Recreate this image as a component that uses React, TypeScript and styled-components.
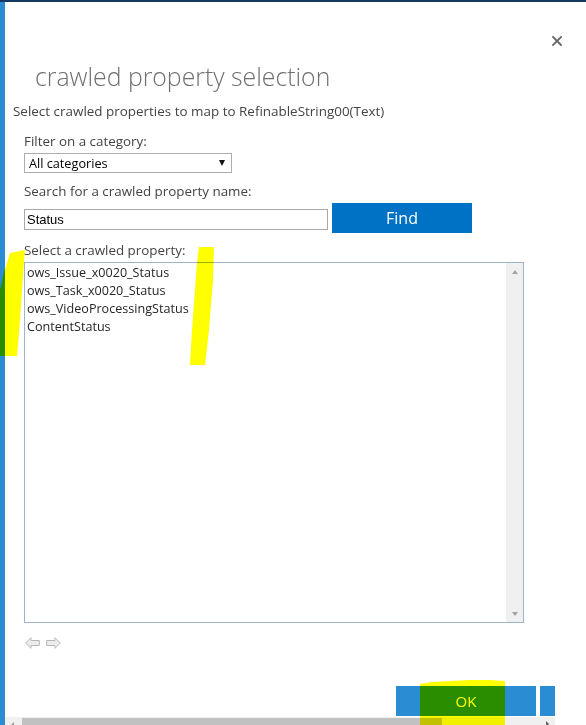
import React from 'react';
import styled, { createGlobalStyle } from 'styled-components';

const Global = createGlobalStyle`
  html, body { margin: 0; padding: 0; background: #fff; }
  body { font-family: "Open Sans", "Noto Sans", sans-serif; }
  * { box-sizing: border-box; }
`;

const Page = styled.div`
  position: relative;
  width: 586px;
  height: 725px;
  display: flex;
  flex-direction: column;
  overflow: hidden;
  background: #fff;
`;
const TopBar = styled.div`
  flex: none;
  height: 2px;
  background: #163a5f;
`;
const Body = styled.div`
  flex: 1;
  display: flex;
  min-height: 0;
`;
const LeftBar = styled.div`
  flex: none;
  width: 5px;
  background: #2a8dd4;
`;
const Main = styled.div`
  flex: 1;
  display: flex;
  flex-direction: column;
  min-width: 0;
`;
const CloseRow = styled.div`
  height: 58px;
  display: flex;
  justify-content: flex-end;
  padding: 34px 24px 0 0;
`;
const Title = styled.h1`
  margin: 0 0 0 30px;
  font-weight: 300;
  font-size: 24.8px;
  line-height: 32px;
  color: #6f6f6f;
  white-space: nowrap;
`;
const Subtitle = styled.div`
  margin: 10px 0 0 8px;
  font-size: 13.45px;
  line-height: 18px;
  color: #444;
  white-space: nowrap;
`;
const Form = styled.div`
  display: flex;
  flex-direction: column;
  padding-left: 19px;
`;
const Label = styled.div<{ $top: number }>`
  margin-top: ${p => p.$top}px;
  font-size: 13.4px;
  line-height: 18px;
  color: #444;
  white-space: nowrap;
`;
const SelectBox = styled.div`
  margin-top: 3px;
  width: 208px;
  height: 20px;
  border: 1px solid #abadb3;
  display: flex;
  align-items: center;
  justify-content: space-between;
  padding: 0 6px 0 4px;
  font-size: 12.7px;
  color: #000;
`;
const Caret = styled.span`
  width: 0;
  height: 0;
  border-left: 3.5px solid transparent;
  border-right: 3.5px solid transparent;
  border-top: 6px solid #111;
`;
const SearchRow = styled.div`
  margin-top: 3px;
  display: flex;
  align-items: flex-start;
  gap: 4px;
`;
const TextInput = styled.input`
  margin-top: 6px;
  width: 304px;
  height: 21px;
  border: 1px solid #a9a9a9;
  padding: 0 2px;
  font-family: "Liberation Sans", Arial, sans-serif;
  font-size: 13px;
  color: #000;
  outline: none;
`;
const FindButton = styled.button`
  width: 140px;
  height: 30px;
  border: none;
  background: #0072c6;
  color: #fff;
  font-family: "Open Sans", sans-serif;
  font-size: 16px;
  line-height: 30px;
  padding: 0;
`;
const ListBox = styled.div`
  margin-top: 3px;
  width: 500px;
  height: 361px;
  border: 1px solid #9eb4c8;
  display: flex;
`;
const Items = styled.div`
  flex: 1;
  padding: 1px 0 0 2px;
`;
const Item = styled.div`
  font-size: 12.6px;
  line-height: 18px;
  color: #262626;
  white-space: nowrap;
`;
const VScroll = styled.div`
  flex: none;
  width: 17px;
  background: #f0f0f0;
  display: flex;
  flex-direction: column;
  justify-content: space-between;
  align-items: center;
  padding: 7px 0 6px;
`;
const TriUp = styled.span`
  width: 0;
  height: 0;
  border-left: 3.5px solid transparent;
  border-right: 3.5px solid transparent;
  border-bottom: 4px solid #a3a3a3;
`;
const TriDown = styled.span`
  width: 0;
  height: 0;
  border-left: 3.5px solid transparent;
  border-right: 3.5px solid transparent;
  border-top: 4px solid #a3a3a3;
`;
const NavRow = styled.div`
  margin-top: 14px;
  display: flex;
  gap: 6px;
  padding-left: 1px;
`;
const Footer = styled.div`
  margin-top: auto;
  width: 550px;
  overflow: hidden;
  display: flex;
  flex-direction: column;
`;
const ButtonRow = styled.div`
  display: flex;
  gap: 4px;
  padding-left: 391px;
  height: 30px;
`;
const DialogButton = styled.button`
  flex: none;
  width: 140px;
  height: 30px;
  border: none;
  padding: 0;
  background: #2a8dd4;
  color: #fff;
  font-family: "Open Sans", sans-serif;
  font-size: 15px;
  line-height: 30px;
`;
const HScroll = styled.div`
  margin-top: 1px;
  height: 8px;
  background: #f0f0f0;
  display: flex;
  align-items: flex-start;
  padding-top: 1px;
  position: relative;
`;
const HThumb = styled.div`
  margin-left: 17px;
  width: 420px;
  height: 8px;
  background: #c1c1c1;
`;
const HArrowRight = styled.span`
  position: absolute;
  right: 6px;
  top: 4px;
  width: 0;
  height: 0;
  border-top: 3px solid transparent;
  border-bottom: 3px solid transparent;
  border-left: 3px solid #606060;
`;
const HArrowLeft = styled.span`
  position: absolute;
  left: 6px;
  top: 5px;
  width: 0;
  height: 0;
  border-top: 3px solid transparent;
  border-bottom: 3px solid transparent;
  border-right: 3px solid #9a9a9a;
`;
const Marker = styled.svg`
  position: absolute;
  left: 0;
  top: 0;
  width: 586px;
  height: 725px;
  pointer-events: none;
  mix-blend-mode: multiply;
`;

const CloseIcon = () => (
  <svg width="10" height="10" viewBox="0 0 10 10">
    <path d="M1 1 L9 9 M9 1 L1 9" stroke="#666" strokeWidth="1.8" strokeLinecap="square" />
  </svg>
);

const NavArrow = ({ dir }: { dir: 'left' | 'right' }) => (
  <svg width="15" height="12" viewBox="0 0 15 12" style={dir === 'right' ? { transform: 'scaleX(-1)' } : undefined}>
    <polygon points="0.7,6 6,0.7 6,3.5 14.3,3.5 14.3,8.5 6,8.5 6,11.3" fill="#ececec" stroke="#b8b8b8" strokeWidth="1" />
  </svg>
);

const items = [
  'ows_Issue_x0020_Status',
  'ows_Task_x0020_Status',
  'ows_VideoProcessingStatus',
  'ContentStatus',
];

export default function App() {
  return (
    <>
      <Global />
      <Page>
        <TopBar />
        <Body>
          <LeftBar />
          <Main>
            <CloseRow>
              <CloseIcon />
            </CloseRow>
            <Title>crawled property selection</Title>
            <Subtitle>Select crawled properties to map to RefinableString00(Text)</Subtitle>
            <Form>
              <Label $top={12}>Filter on a category:</Label>
              <SelectBox>
                <span>All categories</span>
                <Caret />
              </SelectBox>
              <Label $top={9}>Search for a crawled property name:</Label>
              <SearchRow>
                <TextInput defaultValue="Status" />
                <FindButton>Find</FindButton>
              </SearchRow>
              <Label $top={8}>Select a crawled property:</Label>
              <ListBox>
                <Items>
                  {items.map(i => (
                    <Item key={i}>{i}</Item>
                  ))}
                </Items>
                <VScroll>
                  <TriUp />
                  <TriDown />
                </VScroll>
              </ListBox>
              <NavRow>
                <NavArrow dir="left" />
                <NavArrow dir="right" />
              </NavRow>
            </Form>
            <Footer>
              <ButtonRow>
                <DialogButton>OK</DialogButton>
                <DialogButton aria-label="Cancel" />
              </ButtonRow>
              <HScroll>
                <HArrowLeft />
                <HThumb />
                <HArrowRight />
              </HScroll>
            </Footer>
          </Main>
        </Body>
        <Marker viewBox="0 0 586 725">
          <polygon fill="#ffff00" points="10,253 25,250 23,275 20,320 17,356 0,356 0,290 4,272" />
          <polygon fill="#ffff00" points="199,247 214,247 213,280 209,330 205,365 190,365 192,330 195,290 197,262" />
          <polygon fill="#ffff00" points="420,684 432,682 450,681 470,680 490,680 505,681 505,725 420,725" />
        </Marker>
      </Page>
    </>
  );
}
